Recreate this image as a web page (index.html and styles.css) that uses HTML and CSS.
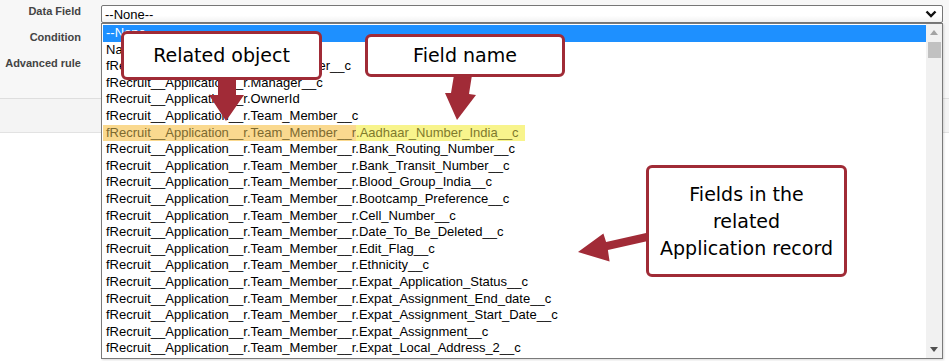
FILE: index.html
```html
<!DOCTYPE html>
<html lang="en">

<head>
  <meta charset="UTF-8">
  <meta name="viewport" content="width=device-width, initial-scale=1.0">
  <title>Data Field picker</title>
  <link rel="stylesheet" href="styles.css">
</head>

<body>
  <div class="page">
    <section class="filter">
      <div class="row">
        <span class="label">Data Field</span>
        <div class="select">
          <span>--None--</span>
          <svg class="chevron" width="12" height="8" viewBox="0 0 12 8">
            <path d="M1.5 1.5l4.5 4.5 4.5-4.5" fill="none" stroke="#111" stroke-width="2.4"/>
          </svg>
        </div>
      </div>
      <div class="row"><span class="label">Condition</span></div>
      <div class="row"><span class="label">Advanced rule</span></div>
    </section>
    <div class="band"></div>

    <!-- open dropdown of the Data Field select -->
    <div class="listbox">
      <div class="options">
        <div class="option selected">--None--</div>
        <div class="option">Name</div>
        <div class="option">fRecruit__Application__r.Team_Leader__c</div>
        <div class="option">fRecruit__Application__r.Manager__c</div>
        <div class="option">fRecruit__Application__r.OwnerId</div>
        <div class="option">fRecruit__Application__r.Team_Member__c</div>
        <div class="option marked"><span class="mark-object">fRecruit__Application__r.Team_Member__r</span><span class="mark-field">.Aadhaar_Number_India__c</span></div>
        <div class="option">fRecruit__Application__r.Team_Member__r.Bank_Routing_Number__c</div>
        <div class="option">fRecruit__Application__r.Team_Member__r.Bank_Transit_Number__c</div>
        <div class="option">fRecruit__Application__r.Team_Member__r.Blood_Group_India__c</div>
        <div class="option">fRecruit__Application__r.Team_Member__r.Bootcamp_Preference__c</div>
        <div class="option">fRecruit__Application__r.Team_Member__r.Cell_Number__c</div>
        <div class="option">fRecruit__Application__r.Team_Member__r.Date_To_Be_Deleted__c</div>
        <div class="option">fRecruit__Application__r.Team_Member__r.Edit_Flag__c</div>
        <div class="option">fRecruit__Application__r.Team_Member__r.Ethnicity__c</div>
        <div class="option">fRecruit__Application__r.Team_Member__r.Expat_Application_Status__c</div>
        <div class="option">fRecruit__Application__r.Team_Member__r.Expat_Assignment_End_date__c</div>
        <div class="option">fRecruit__Application__r.Team_Member__r.Expat_Assignment_Start_Date__c</div>
        <div class="option">fRecruit__Application__r.Team_Member__r.Expat_Assignment__c</div>
        <div class="option">fRecruit__Application__r.Team_Member__r.Expat_Local_Address_2__c</div>
      </div>
      <div class="scrollbar">
        <div class="scroll-btn">
          <svg width="8" height="5" viewBox="0 0 8 5"><path d="M0 5h8L4 0z" fill="#a3a3a3"/></svg>
        </div>
        <div class="thumb"></div>
        <div class="track"></div>
        <div class="scroll-btn">
          <svg width="8" height="5" viewBox="0 0 8 5"><path d="M0 0h8L4 5z" fill="#505050"/></svg>
        </div>
      </div>
    </div>

    <!-- annotation arrows -->
    <svg class="arrows" width="949" height="361" viewBox="0 0 949 361">
      <polygon points="218,78 236,78 236,95 244,95 226,121 209,95 218,95" fill="#a12b37"/>
      <polygon points="454,75 472,75 469,94 476,95 457,120 445,93 451,93" fill="#a12b37"/>
      <polygon points="646.1,233.1 606.1,242.1 603.4,233.4 578,252 609.6,261.6 607.9,249.9 647.9,240.9" fill="#a12b37"/>
    </svg>

    <div class="callout callout-object">Related object</div>
    <div class="callout callout-field">Field name</div>
    <div class="callout callout-record">Fields in the<br>related<br>Application record</div>
  </div>
</body>

</html>
```

FILE: styles.css
```css
body {
  margin: 0;
  font-family: "Liberation Sans", Arial, sans-serif;
  background: #fff;
}

.page {
  position: relative;
  width: 949px;
  height: 361px;
  overflow: hidden;
}

.filter {
  height: 99px;
  padding-top: 4px;
  box-sizing: border-box;
  background: #f7f7f7;
  border-bottom: 1px solid #dedede;
}

.row {
  display: flex;
  align-items: flex-start;
  height: 26px;
}

.label {
  width: 81px;
  margin-right: 20px;
  text-align: right;
  font-size: 11px;
  font-weight: bold;
  line-height: 14px;
  color: #444;
}

.select {
  display: flex;
  align-items: center;
  justify-content: space-between;
  width: 842px;
  height: 18px;
  margin-top: 1px;
  padding: 0 5px 0 3px;
  box-sizing: border-box;
  border: 1px solid #767676;
  border-radius: 2px;
  background: linear-gradient(#fff, #fff 60%, #f2f2f2);
  font-size: 13px;
  color: #000;
}

.band {
  height: 33px;
  background: #f4f4f4;
  border-bottom: 1px solid #e2e2e2;
}

.listbox {
  position: absolute;
  left: 101px;
  top: 23px;
  width: 842px;
  height: 336px;
  box-sizing: border-box;
  display: flex;
  border: 1px solid #7a7a7a;
  background: #fff;
  box-shadow: 1px 1px 2px rgba(0, 0, 0, 0.15);
}

.options {
  flex: 1;
  padding: 1px 0 0 1px;
  overflow: hidden;
}

.option {
  height: 16.6px;
  line-height: 16.6px;
  padding-left: 3px;
  white-space: nowrap;
  font-size: 13px;
  color: #000;
}

.option.selected {
  background: #1e90ff;
  color: #fff;
}

.option.marked {
  padding-left: 0;
}

.mark-object {
  display: inline-block;
  padding-left: 3px;
  background: #fad98f;
  color: #7d6a30;
}

.mark-field {
  display: inline-block;
  padding-right: 6px;
  background: #f8f48c;
  color: #7f7a2c;
}

.scrollbar {
  width: 16px;
  display: flex;
  flex-direction: column;
  background: #f1f1f1;
}

.scroll-btn {
  height: 17px;
  display: flex;
  align-items: center;
  justify-content: center;
}

.thumb {
  height: 16px;
  margin: 1px 1px 0 2px;
  background: #c1c1c1;
}

.track {
  flex: 1;
}

.arrows {
  position: absolute;
  left: 0;
  top: 0;
  pointer-events: none;
}

.callout {
  position: absolute;
  display: flex;
  align-items: center;
  justify-content: center;
  box-sizing: border-box;
  border: 3px solid #a02b36;
  border-radius: 6px;
  background: #fff;
  text-align: center;
  font-family: "DejaVu Sans", sans-serif;
  font-size: 19px;
  line-height: 27px;
  color: #000;
}

.callout-object {
  left: 121px;
  top: 31px;
  width: 201px;
  height: 49px;
}

.callout-field {
  left: 365px;
  top: 34px;
  width: 200px;
  height: 43px;
}

.callout-record {
  left: 646px;
  top: 165px;
  width: 201px;
  height: 112px;
}
```
